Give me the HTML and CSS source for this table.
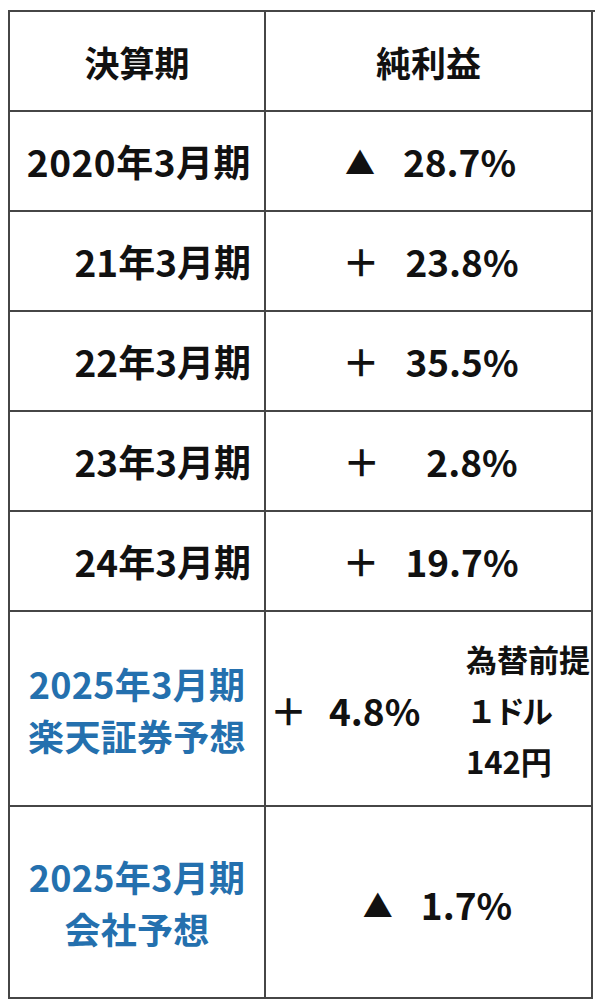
FILE: index.html
```html
<!DOCTYPE html>
<html lang="ja">
<head>
<meta charset="utf-8">
<title>純利益</title>
<link rel="stylesheet" href="styles.css">
</head>
<body>
<div class="table">
  <div class="cell head">決算期</div>
  <div class="cell head">純利益</div>

  <div class="cell period wide">2020年3月期</div>
  <div class="cell value"><span class="sign tri">▲</span><span class="num">28.7%</span></div>

  <div class="cell period">21年3月期</div>
  <div class="cell value"><span class="sign">＋</span><span class="num">23.8%</span></div>

  <div class="cell period">22年3月期</div>
  <div class="cell value"><span class="sign">＋</span><span class="num">35.5%</span></div>

  <div class="cell period">23年3月期</div>
  <div class="cell value"><span class="sign">＋</span><span class="num short">2.8%</span></div>

  <div class="cell period">24年3月期</div>
  <div class="cell value"><span class="sign">＋</span><span class="num">19.7%</span></div>

  <div class="cell forecast">
    <div class="line">2025年3月期</div>
    <div class="line">楽天証券予想</div>
  </div>
  <div class="cell split">
    <div class="split-value"><span class="sign">＋</span><span class="num">4.8%</span></div>
    <div class="note">
      <div class="note-line">為替前提</div>
      <div class="note-line tight">１ドル</div>
      <div class="note-line">142円</div>
    </div>
  </div>

  <div class="cell forecast">
    <div class="line">2025年3月期</div>
    <div class="line">会社予想</div>
  </div>
  <div class="cell value shifted"><span class="sign tri">▲</span><span class="num">1.7%</span></div>
</div>
</body>
</html>
```

FILE: styles.css
```css
html, body {
  background: #ffffff;
}
body {
  margin: 10px 0 0 8px;
  font-family: "Noto Sans CJK JP", "Noto Sans", sans-serif;
  font-weight: 700;
  color: #111111;
}
.table {
  display: grid;
  grid-template-columns: 256px 327px;
  grid-template-rows: 100px 100px 100px 100px 100px 100px 195px 192px;
  width: 585px;
  border-top: 2px solid #464646;
  border-left: 2px solid #464646;
}
.cell {
  box-sizing: border-box;
  border-right: 2px solid #464646;
  border-bottom: 2px solid #464646;
  display: flex;
  align-items: center;
  font-size: 37px;
  line-height: 1.2;
}
.head {
  justify-content: center;
  font-size: 35px;
  padding-top: 2px;
}
.period {
  justify-content: flex-end;
  padding-right: 13px;
}
.wide {
  letter-spacing: 0.5px;
}
.value {
  justify-content: center;
  padding-left: 4px;
}
.sign {
  margin-right: 26px;
}
.tri {
  font-size: 30px;
  margin-right: 28px;
}
.num.short {
  margin-left: 20px;
}
.forecast {
  flex-direction: column;
  justify-content: center;
  color: #2470ae;
  text-align: center;
  font-size: 36px;
  letter-spacing: 0.3px;
}
.line {
  line-height: 52px;
}
.split {
  justify-content: space-between;
  padding-left: 4px;
  padding-right: 1px;
}
.split-value {
  display: flex;
  align-items: center;
  padding-top: 4px;
}
.split-value .sign {
  margin-right: 22px;
}
.note {
  font-size: 31px;
  display: flex;
  flex-direction: column;
  padding-top: 2px;
}
.note-line {
  line-height: 51px;
}
.note-line.tight {
  letter-spacing: -3px;
}
.shifted {
  padding-left: 18px;
  padding-top: 4px;
}
```
